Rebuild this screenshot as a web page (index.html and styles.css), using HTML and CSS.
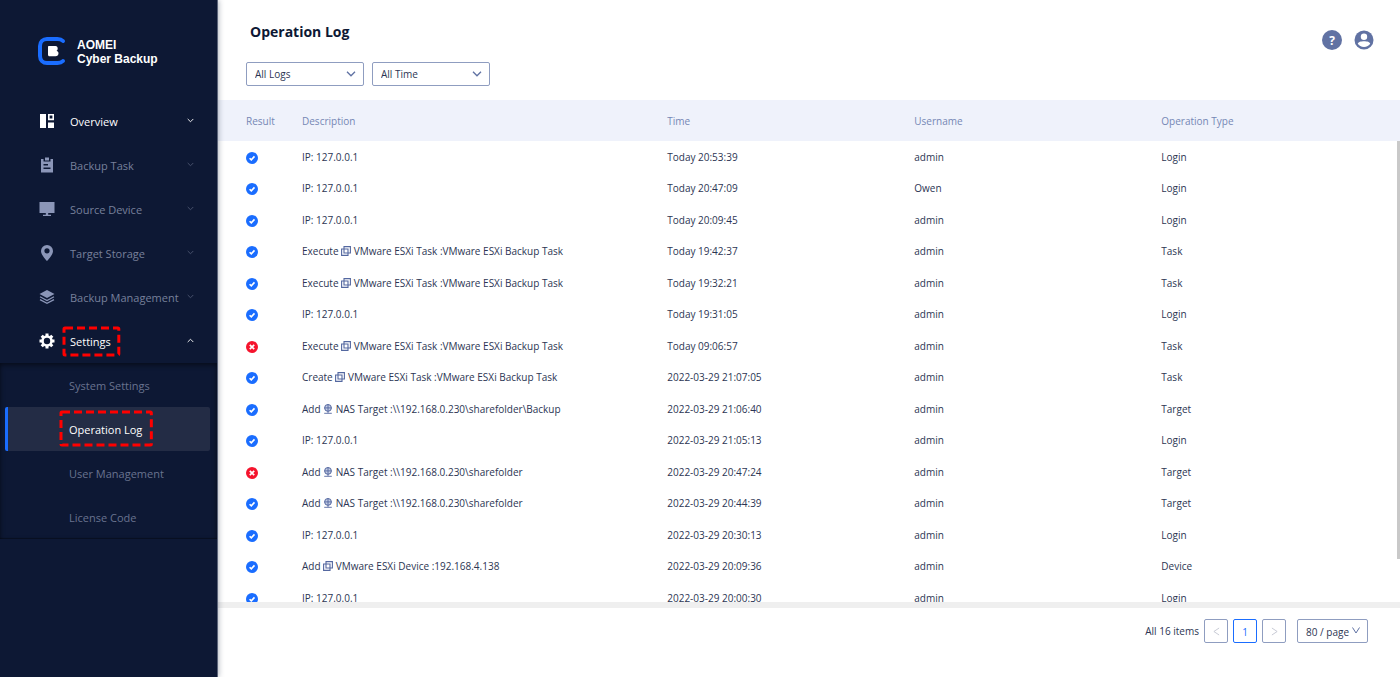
FILE: index.html
```
<!DOCTYPE html>
<html lang="en">
<head>
    <meta charset="utf-8">
    <title>Operation Log - AOMEI Cyber Backup</title>
    <link rel="stylesheet" href="styles.css">
</head>
<body>
    <!-- shared icons -->
    <svg class="sprite" width="0" height="0" aria-hidden="true">
        <symbol id="ok" viewBox="0 0 12 12">
            <circle cx="6" cy="6" r="6" fill="#1a6dff"/>
            <path d="M3.6 6.2l1.7 1.7 3.2-3.5" fill="none" stroke="#fff" stroke-width="1.6"/>
        </symbol>
        <symbol id="fail" viewBox="0 0 12 12">
            <circle cx="6" cy="6" r="6" fill="#f5142d"/>
            <path d="M3.8 3.8l4.4 4.4M8.2 3.8l-4.4 4.4" fill="none" stroke="#fff" stroke-width="1.7"/>
        </symbol>
        <symbol id="vm" viewBox="0 0 10 10">
            <path d="M3 .6h6.400v6.400H3zM.6 3H7v6.400H.6z" fill="none" stroke="#5468a0" stroke-width="1.1"/>
        </symbol>
        <symbol id="nas" viewBox="0 0 10 10">
            <circle cx="5" cy="3.9" r="3.4" fill="#c3cce4" stroke="#5468a0"/>
            <path d="M1.6 3.9h6.8M5 .5v8.6M1.2 9.3h7.6" fill="none" stroke="#5468a0" stroke-width=".9"/>
        </symbol>
        <symbol id="down" viewBox="0 0 10 6">
            <path d="M1 .8l4 4 4-4" fill="none" stroke="currentColor" stroke-width="1.3"/>
        </symbol>
    </svg>

    <div class="app">
        <aside class="sidebar">
            <a class="logo" href="#">
                <svg width="28" height="28" viewBox="0 0 28 28">
                    <path d="M25 4C23.5 2.4 21.5 2 19.5 2H9C5 2 2 5 2 9v10c0 4 3 7 7 7h10.5c2 0 4-.4 5.5-2" fill="none" stroke="#1a6dff" stroke-width="4" stroke-linecap="round"/>
                    <path d="M11 9h6.5c1.5 0 2.2 1 2.2 2.5 0 1.2-.5 1.8-1.2 2.3 1.3.4 2 1.300 2 2.500 0 1.900-1.200 2.900-3 2.900H11.500c-1 0-1.500-.6-1.500-1.500V10c0-.6.4-1 1-1z" fill="#fff"/>
                </svg>
                <span>AOMEI<br>Cyber Backup</span>
            </a>

            <nav>
                <a class="item bright" href="#">
                    <svg class="icon" viewBox="0 0 16 16"><path d="M1 1h6v14H1zM9 9.5h6V15H9z"/><path d="M9.8 1.8h4.4v4.6H9.8z" fill="none" stroke="currentColor" stroke-width="1.6"/></svg>
                    <span class="label">Overview</span>
                    <svg class="chev"><use href="#down"/></svg>
                </a>
                <a class="item" href="#">
                    <svg class="icon" viewBox="0 0 16 16"><path fill-rule="evenodd" d="M2 2h2.5v2.5h7V2H14v13.5H2zM4.5 7v1.5H9V7zM4.5 10.5V12h7v-1.5zM6 .5h4v3H6z"/></svg>
                    <span class="label">Backup Task</span>
                    <svg class="chev"><use href="#down"/></svg>
                </a>
                <a class="item" href="#">
                    <svg class="icon" viewBox="0 0 16 16"><path d="M.5 1h15v11H9.200v1.800H12V15H4v-1.200h2.800V12H.5z"/></svg>
                    <span class="label">Source Device</span>
                    <svg class="chev"><use href="#down"/></svg>
                </a>
                <a class="item" href="#">
                    <svg class="icon" viewBox="0 0 16 16"><path fill-rule="evenodd" d="M8 0a6 6 0 0 0-6 6c0 4.200 6 10 6 10s6-5.800 6-10a6 6 0 0 0-6-6zm0 3.200a2.600 2.600 0 1 1 0 5.200 2.600 2.600 0 0 1 0-5.200z"/></svg>
                    <span class="label">Target Storage</span>
                    <svg class="chev"><use href="#down"/></svg>
                </a>
                <a class="item" href="#">
                    <svg class="icon" viewBox="0 0 16 16"><path d="M8 1l7.500 4L8 9 .500 5z"/><path d="M1 7.800l7 3.700 7-3.700M1 10.600l7 3.700 7-3.700" fill="none" stroke="currentColor" stroke-width="1.3"/></svg>
                    <span class="label">Backup Management</span>
                    <svg class="chev"><use href="#down"/></svg>
                </a>
                <a class="item bright open" href="#">
                    <svg class="icon" viewBox="0 0 16 16"><circle cx="8" cy="8" r="4.5" fill="none" stroke="currentColor" stroke-width="2.6"/><path d="M8 .5V3M8 13v2.500M.5 8H3M13 8h2.500M2.700 2.700l1.700 1.700M11.600 11.600l1.700 1.700M2.700 13.300l1.700-1.700M11.600 4.400l1.700-1.700" stroke="currentColor" stroke-width="3"/></svg>
                    <span class="label">Settings<svg class="mark"><rect width="100%" height="100%"/></svg></span>
                    <svg class="chev"><use href="#down"/></svg>
                </a>
                <div class="submenu">
                    <a href="#">System Settings</a>
                    <a class="active" href="#"><span class="label">Operation Log<svg class="mark"><rect width="100%" height="100%"/></svg></span></a>
                    <a href="#">User Management</a>
                    <a href="#">License Code</a>
                </div>
            </nav>
        </aside>

        <main class="main">
            <header class="top">
                <div>
                    <h1>Operation Log</h1>
                    <div class="filters">
                        <div class="select">
                            <select aria-label="Logs"><option>All Logs</option></select>
                            <svg><use href="#down"/></svg>
                        </div>
                        <div class="select">
                            <select aria-label="Time"><option>All Time</option></select>
                            <svg><use href="#down"/></svg>
                        </div>
                    </div>
                </div>
                <div class="tools">
                    <button type="button" class="help" aria-label="Help">?</button>
                    <button type="button" aria-label="Account">
                        <svg width="20" height="20" viewBox="0 0 20 20"><circle cx="10" cy="10" r="9.5" fill="#6172a3"/><circle cx="10" cy="6.7" r="3.2" fill="#fff"/><path d="M3.8 13.8c0-1.900 3.500-2.600 6.200-2.600s6.200.7 6.200 2.600C15 15.800 12.800 17 10 17s-5-1.200-6.200-3.200z" fill="#fff"/></svg>
                    </button>
                </div>
            </header>

            <div class="log">
                <table>
                    <colgroup>
                        <col class="c-result"><col class="c-desc"><col class="c-time"><col class="c-user"><col>
                    </colgroup>
                    <thead>
                        <tr><th>Result</th><th>Description</th><th>Time</th><th>Username</th><th>Operation Type</th></tr>
                    </thead>
                    <tbody>
                        <tr><td><svg class="state"><use href="#ok"/></svg></td><td>IP: 127.0.0.1</td><td>Today 20:53:39</td><td>admin</td><td>Login</td></tr>
                        <tr><td><svg class="state"><use href="#ok"/></svg></td><td>IP: 127.0.0.1</td><td>Today 20:47:09</td><td>Owen</td><td>Login</td></tr>
                        <tr><td><svg class="state"><use href="#ok"/></svg></td><td>IP: 127.0.0.1</td><td>Today 20:09:45</td><td>admin</td><td>Login</td></tr>
                        <tr><td><svg class="state"><use href="#ok"/></svg></td><td>Execute <svg class="kind"><use href="#vm"/></svg> VMware ESXi Task :VMware ESXi Backup Task</td><td>Today 19:42:37</td><td>admin</td><td>Task</td></tr>
                        <tr><td><svg class="state"><use href="#ok"/></svg></td><td>Execute <svg class="kind"><use href="#vm"/></svg> VMware ESXi Task :VMware ESXi Backup Task</td><td>Today 19:32:21</td><td>admin</td><td>Task</td></tr>
                        <tr><td><svg class="state"><use href="#ok"/></svg></td><td>IP: 127.0.0.1</td><td>Today 19:31:05</td><td>admin</td><td>Login</td></tr>
                        <tr><td><svg class="state"><use href="#fail"/></svg></td><td>Execute <svg class="kind"><use href="#vm"/></svg> VMware ESXi Task :VMware ESXi Backup Task</td><td>Today 09:06:57</td><td>admin</td><td>Task</td></tr>
                        <tr><td><svg class="state"><use href="#ok"/></svg></td><td>Create <svg class="kind"><use href="#vm"/></svg> VMware ESXi Task :VMware ESXi Backup Task</td><td>2022-03-29 21:07:05</td><td>admin</td><td>Task</td></tr>
                        <tr><td><svg class="state"><use href="#ok"/></svg></td><td>Add <svg class="kind"><use href="#nas"/></svg> NAS Target :\\192.168.0.230\sharefolder\Backup</td><td>2022-03-29 21:06:40</td><td>admin</td><td>Target</td></tr>
                        <tr><td><svg class="state"><use href="#ok"/></svg></td><td>IP: 127.0.0.1</td><td>2022-03-29 21:05:13</td><td>admin</td><td>Login</td></tr>
                        <tr><td><svg class="state"><use href="#fail"/></svg></td><td>Add <svg class="kind"><use href="#nas"/></svg> NAS Target :\\192.168.0.230\sharefolder</td><td>2022-03-29 20:47:24</td><td>admin</td><td>Target</td></tr>
                        <tr><td><svg class="state"><use href="#ok"/></svg></td><td>Add <svg class="kind"><use href="#nas"/></svg> NAS Target :\\192.168.0.230\sharefolder</td><td>2022-03-29 20:44:39</td><td>admin</td><td>Target</td></tr>
                        <tr><td><svg class="state"><use href="#ok"/></svg></td><td>IP: 127.0.0.1</td><td>2022-03-29 20:30:13</td><td>admin</td><td>Login</td></tr>
                        <tr><td><svg class="state"><use href="#ok"/></svg></td><td>Add <svg class="kind"><use href="#vm"/></svg> VMware ESXi Device :192.168.4.138</td><td>2022-03-29 20:09:36</td><td>admin</td><td>Device</td></tr>
                        <tr><td><svg class="state"><use href="#ok"/></svg></td><td>IP: 127.0.0.1</td><td>2022-03-29 20:00:30</td><td>admin</td><td>Login</td></tr>
                    </tbody>
                </table>
                <div class="scrollbar"></div>
            </div>

            <footer class="pager">
                <span>All 16 items</span>
                <button type="button" disabled aria-label="Previous page"><svg viewBox="0 0 8 10"><path d="M7 1L1 5l6 4"/></svg></button>
                <button type="button" class="current">1</button>
                <button type="button" disabled aria-label="Next page"><svg viewBox="0 0 8 10"><path d="M1 1l6 4-6 4"/></svg></button>
                <div class="select size">
                    <select aria-label="Page size"><option>80 / page</option></select>
                    <svg viewBox="0 0 8 7"><path d="M.5.5L4 6 7.500.5" fill="none" stroke="currentColor"/></svg>
                </div>
            </footer>
        </main>
    </div>
</body>
</html>
```

FILE: styles.css
```
* {
    box-sizing: border-box;
}

body {
    margin: 0;
    font-family: "Open Sans", "Noto Sans", sans-serif;
    font-size: 10px;
    color: #2c3553;
    background: #fff;
}

a {
    color: inherit;
    text-decoration: none;
}

button, select {
    font: inherit;
    color: inherit;
}

.sprite {
    position: absolute;
}

.app {
    display: flex;
    height: 100vh;
}

/* sidebar */
.sidebar {
    flex: none;
    width: 218px;
    background: #0d1834;
    border-right: 1px solid #5b6479;
    box-shadow: 0 0 6px rgba(13, 24, 52, 0.4);
    z-index: 1;
}

.logo {
    display: flex;
    align-items: center;
    gap: 11px;
    padding: 36px 0 0 38px;
    color: #fff;
    font: bold 12px/14px "Liberation Sans", Arial, sans-serif;
}

.logo span {
    padding-top: 2px;
}

nav {
    padding-top: 33px;
}

.item {
    display: flex;
    align-items: center;
    height: 44px;
    padding: 0 23px 0 39px;
    font-size: 11px;
    color: #77809b;
}

.item .icon {
    width: 16px;
    height: 16px;
    margin-right: 15px;
    fill: currentColor;
    color: #8b96b8;
}

.bright, .bright .icon {
    color: #fff;
}

.chev {
    width: 7px;
    height: 5px;
    margin: 0 0 2px auto;
    opacity: 0.6;
}

.bright .chev {
    opacity: 1;
}

.open .chev {
    transform: rotate(180deg);
}

.label {
    position: relative;
}

.mark {
    position: absolute;
    top: -6px;
    left: -6px;
    width: calc(100% + 14px);
    height: calc(100% + 12px);
    overflow: visible;
}

.mark rect {
    fill: none;
    stroke: #f00;
    stroke-width: 3;
    stroke-dasharray: 8 4;
    rx: 1px;
}

.submenu {
    box-shadow: inset 0 2px 5px rgba(0, 0, 0, 0.5), inset 0 -1px 1px rgba(0, 0, 0, 0.3);
    font-size: 11px;
    color: #69738f;
}

.submenu a {
    display: flex;
    align-items: center;
    height: 44px;
    margin: 0 7px 0 5px;
    padding-left: 61px;
    border-left: 3px solid transparent;
    border-radius: 2px;
}

.submenu .active {
    background: #232c45;
    border-color: #1a6dff;
    color: #fff;
}

.active .mark {
    top: -10px;
    left: -8px;
    width: calc(100% + 17px);
    height: calc(100% + 18px);
}

/* content */
.main {
    flex: 1;
    display: flex;
    flex-direction: column;
    min-width: 0;
}

.top {
    display: flex;
    justify-content: space-between;
    align-items: flex-start;
    height: 100px;
    padding: 22px 26px 0 28px;
}

h1 {
    margin: 0 0 20px 4px;
    font-size: 14px;
    line-height: 20px;
    color: #0d1834;
}

.filters {
    display: flex;
    gap: 8px;
}

.select {
    position: relative;
    width: 118px;
}

.select select {
    display: block;
    width: 100%;
    height: 24px;
    padding: 0 8px;
    border: 1px solid #8f9dc0;
    border-radius: 2px;
    background: #fff;
    appearance: none;
}

.select svg {
    position: absolute;
    top: 9px;
    right: 8px;
    width: 10px;
    height: 6px;
    color: #5f71a3;
    pointer-events: none;
}

.tools {
    display: flex;
    gap: 12px;
    padding-top: 8px;
}

.tools button {
    display: block;
    width: 20px;
    height: 20px;
    padding: 0;
    border: 0;
    border-radius: 50%;
    background: none;
}

.tools .help {
    background: #6172a3;
    color: #fff;
    font-size: 12px;
    font-weight: bold;
}

.log {
    flex: 1;
    position: relative;
    overflow: hidden;
    border-bottom: 6px solid #efefef;
}

table {
    width: 100%;
    table-layout: fixed;
    border-collapse: collapse;
}

.c-result {
    width: 84px;
}

.c-desc {
    width: 30.9%;
}

.c-time, .c-user {
    width: 20.9%;
}

th, td {
    padding: 0;
    text-align: left;
    white-space: nowrap;
}

th:first-child, td:first-child {
    padding-left: 28px;
}

th {
    height: 41px;
    background: #eff2fb;
    color: #7587b5;
    font-weight: normal;
}

td {
    height: 31px;
}

tr:nth-child(even) td {
    height: 32px;
}

.state {
    display: block;
    width: 12px;
    height: 12px;
    margin-top: 2px;
}

.kind {
    width: 10px;
    height: 10px;
    vertical-align: -1px;
}

.scrollbar {
    position: absolute;
    top: 41px;
    right: 0;
    width: 3px;
    height: 418px;
    background: #c9c9c9;
}

.pager {
    display: flex;
    justify-content: flex-end;
    align-items: flex-start;
    gap: 5px;
    height: 69px;
    padding: 11px 32px 0;
    line-height: 24px;
}

.pager button {
    width: 24px;
    height: 24px;
    padding: 0;
    border: 1px solid #8f9dc0;
    border-radius: 2px;
    background: #fff;
}

.pager button svg {
    width: 7px;
    height: 9px;
    fill: none;
    stroke: #c0c4cf;
}

.pager .current {
    border-color: #1a6dff;
    color: #1a6dff;
}

.size {
    width: 71px;
    margin-left: 6px;
}

.size svg {
    top: 8px;
    width: 8px;
    height: 7px;
}
```
